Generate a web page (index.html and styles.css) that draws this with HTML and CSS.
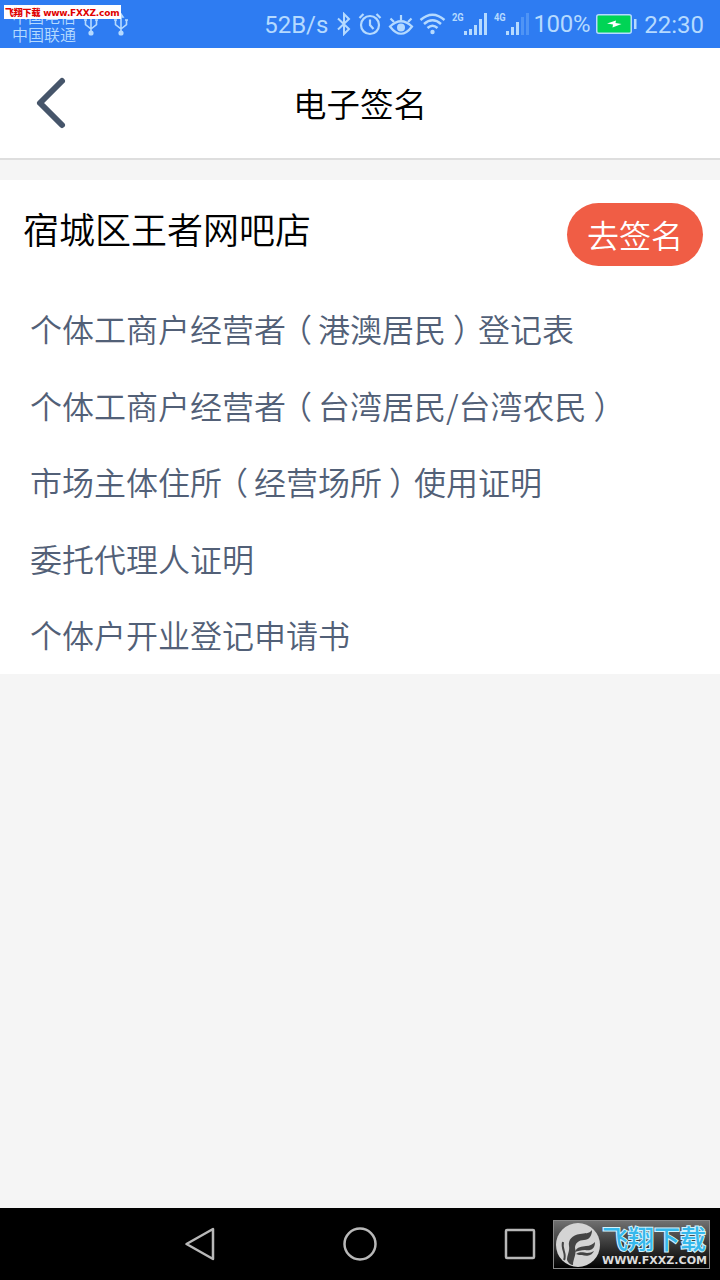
FILE: index.html
```html
<!DOCTYPE html>
<html lang="zh-CN">
<head>
    <meta charset="UTF-8">
    <meta name="viewport" content="width=device-width, initial-scale=1.0">
    <title>电子签名</title>
    <link rel="stylesheet" href="styles.css">
</head>
<body>
    <div class="status-bar">
        <div class="carriers">
            <span>中国电信</span>
            <span>中国联通</span>
        </div>
        <svg class="usb" width="46" height="24" viewBox="0 0 46 24" fill="none" stroke="#b5daff" stroke-width="1.6">
            <g id="usb">
                <path d="M8 2v18M2.500 7v4.500l5.500 4.500M13.500 7v4.500l-5.500 4.500"/>
                <circle cx="8" cy="20" r="1.800" fill="#b5daff"/>
                <path d="M1 7h3M12 7h3M6 4l2-3 2 3z"/>
            </g>
            <use href="#usb" x="30"/>
        </svg>
        <div class="indicators">
            <span class="speed">52B/s</span>
            <svg class="bluetooth" width="14" height="24" viewBox="0 0 14 24" fill="none" stroke="#b5daff" stroke-width="2">
                <path d="M1 6.500l11 10.500-5 5V2l5 5L1 17.500"/>
            </svg>
            <svg class="alarm" width="24" height="24" viewBox="0 0 24 24" fill="none" stroke="#b5daff" stroke-width="2.200">
                <circle cx="12" cy="13" r="9"/>
                <path d="M12 7.500V13l3.500 4M1.500 6l4-4M22.500 6l-4-4"/>
            </svg>
            <svg class="eye" width="26" height="24" viewBox="0 0 26 24" fill="none" stroke="#b5daff" stroke-width="2.200">
                <path d="M2 14.500Q13 4 24 14.500Q13 29 2 14.500z"/>
                <circle cx="13" cy="15.500" r="4" fill="#b5daff" stroke="none"/>
                <path d="M13 8V3M6 10L2.500 6.500M20 10l3.500-3.500"/>
            </svg>
            <svg class="wifi" width="27" height="24" viewBox="0 0 27 24" fill="none" stroke="#b5daff" stroke-width="2.500">
                <path d="M1.500 8Q13.500-2.500 25.500 8M5 12Q13.500 4.500 22 12M8.500 16Q13.500 11.500 18.500 16"/>
                <circle cx="13.500" cy="20" r="2.200" fill="#b5daff" stroke="none"/>
            </svg>
            <span class="net">2G</span>
            <svg class="signal" width="24" height="24" viewBox="0 0 24 24" fill="#b5daff">
                <path d="M0 19h3v4H0zM5 17h3v6H5zM10 13h3v10h-3zM15 7h3v16h-3zM20 1h3v22h-3z"/>
            </svg>
            <span class="net">4G</span>
            <svg class="signal last" width="24" height="24" viewBox="0 0 24 24" fill="#b5daff">
                <path d="M0 19h3v4H0zM5 15h3v8H5zM10 10h3v13h-3z"/>
                <path d="M15 5h3v18h-3zM20 1h3v22h-3z" opacity=".25"/>
            </svg>
            <span class="percent">100%</span>
            <svg class="battery" width="41" height="20" viewBox="0 0 41 20">
                <rect x=".75" y=".75" width="34.500" height="18.500" rx="2" fill="#00d455" stroke="#b5daff" stroke-width="1.500"/>
                <path d="M38 5h2.500v10H38z" fill="#b5daff"/>
                <path d="M11 9.500l9-3-.5 2.500 6 1-9 3.500.5-3z" fill="#fff"/>
            </svg>
            <span class="time">22:30</span>
        </div>
        <div class="site-tag"><b>飞翔下载</b> www.FXXZ.com</div>
    </div>

    <div class="header">
        <svg class="back" width="32" height="54" viewBox="0 0 32 54" fill="none" stroke="#46556a" stroke-width="6" stroke-linecap="round" stroke-linejoin="round">
            <path d="M27 5L5 27l22 22"/>
        </svg>
        <h1>电子签名</h1>
    </div>

    <div class="card">
        <div class="card-head">
            <h2>宿城区王者网吧店</h2>
            <button class="btn">去签名</button>
        </div>
        <ul class="docs">
            <li>个体工商户经营者<i class="open">（</i>港澳居民<i class="close">）</i>登记表</li>
            <li>个体工商户经营者<i class="open">（</i>台湾居民/台湾农民<i class="close">）</i></li>
            <li>市场主体住所<i class="open">（</i>经营场所<i class="close">）</i>使用证明</li>
            <li>委托代理人证明</li>
            <li>个体户开业登记申请书</li>
        </ul>
    </div>

    <div class="nav-bar">
        <svg width="32" height="36" viewBox="0 0 32 36"><path d="M29 3v30L2.500 18z"/></svg>
        <svg width="36" height="36" viewBox="0 0 36 36"><circle cx="18" cy="18" r="15.500"/></svg>
        <svg width="32" height="36" viewBox="0 0 32 36"><rect x="2" y="4" width="28" height="28" rx="1"/></svg>
        <div class="watermark">
            <svg width="46" height="46" viewBox="0 0 46 46">
                <circle cx="23" cy="23" r="22" fill="#d4d4d4"/>
                <path d="M37 8C34 12 30 11 25 12C17 13 13 18 14 24C15 29 12 33 12 38C13 41 16 43 18 43C18 37 22 32 20 26C20 21 24 18 29 18C34 18 37 14 37 8z" fill="#444"/>
                <path d="M20 30C22 24 27 25 31 24C35 24 38 22 40 20C40 27 36 29 30 28C26 28 23 29 20 30z" fill="#444"/>
                <path d="M21 32C26 29 29 31 32 31C35 31 37 30 39 29C36 35 30 34 27 33C25 33 23 33 21 32z" fill="#444"/>
                <path d="M8 20C6 27 12 32 9 38" fill="none" stroke="#444" stroke-width="2"/>
            </svg>
            <div class="brand">
                <strong>飞翔下载</strong>
                <svg width="106" height="13" viewBox="0 0 106 13">
                    <text x="0" y="11" textLength="105" lengthAdjust="spacingAndGlyphs">WWW.FXXZ.COM</text>
                </svg>
            </div>
        </div>
    </div>
</body>
</html>
```
FILE: styles.css
```css
* {
    box-sizing: border-box;
}
body {
    display: flex;
    flex-direction: column;
    height: 1280px;
    margin: 0;
    background: #f5f5f5;
    font-family: 'Noto Sans CJK SC', sans-serif;
    font-weight: 350;
}
svg {
    display: block;
    flex: none;
}
.status-bar {
    position: relative;
    display: flex;
    height: 48px;
    padding: 0 16px 0 12px;
    background: #2e7cf2;
    color: #b5daff;
}
.carriers {
    display: flex;
    flex-direction: column;
    width: 71px;
    padding-top: 7px;
    font-size: 16px;
    line-height: 18px;
}
.usb {
    margin-top: 13px;
}
.indicators {
    display: flex;
    align-items: center;
    height: 48px;
    margin-left: auto;
    font-family: Roboto, sans-serif;
    font-size: 24px;
    font-weight: 400;
    white-space: nowrap;
}
.speed {
    padding-top: 2px;
    margin-right: 9px;
}
.bluetooth {
    margin-right: 7px;
}
.alarm {
    margin-right: 6px;
}
.eye {
    margin-right: 5px;
}
.wifi {
    margin-right: 6px;
}
.net {
    width: 12px;
    margin-bottom: 13px;
    font-size: 11px;
    font-weight: 700;
    line-height: 12px;
    transform: scaleX(0.85);
    transform-origin: left;
}
.signal {
    margin-right: 6px;
}
.signal.last {
    margin-right: 3px;
}
.percent {
    margin-right: 6px;
    padding-bottom: 1px;
    letter-spacing: -0.3px;
}
.battery {
    margin-right: 7px;
}
.time {
    padding-top: 2px;
}
.site-tag {
    position: absolute;
    left: 4px;
    top: 5px;
    width: 117px;
    height: 14px;
    padding-left: 1px;
    background: #fff;
    color: #e00000;
    font: 700 9px/16px 'DejaVu Sans', 'Noto Sans CJK SC', sans-serif;
    letter-spacing: -0.2px;
    white-space: nowrap;
}
.header {
    display: grid;
    grid-template-columns: 104px 1fr 104px;
    align-items: center;
    height: 112px;
    padding: 0;
    background: #fff;
    border-bottom: 2px solid #dedede;
}
.back {
    margin-left: 35px;
}
h1 {
    margin: 0;
    color: #000;
    font-size: 33.5px;
    font-weight: 350;
    line-height: 48px;
    text-align: center;
}
.card {
    height: 494px;
    margin-top: 20px;
    background: #fff;
}
.card-head {
    display: flex;
    justify-content: space-between;
    height: 110px;
    padding: 23px 17px 0 23px;
}
h2 {
    margin: 0;
    color: #000;
    font-size: 36px;
    font-weight: 350;
    line-height: 50px;
}
.btn {
    width: 136px;
    height: 63px;
    padding: 0 0 2px;
    border: none;
    border-radius: 32px;
    background: #f05d45;
    color: #fff;
    font: inherit;
    font-size: 32px;
    line-height: 60px;
}
.docs {
    margin: 0;
    padding: 0 30px;
    color: #526077;
    font-size: 32px;
    line-height: 76.6px;
    list-style: none;
}
.docs i {
    font-style: normal;
}
/* fullwidth brackets sit closer to the middle of their cell */
.open {
    margin: 0 6px 0 -6px;
}
.close {
    margin: 0 -7px 0 7px;
}
.nav-bar {
    position: relative;
    display: flex;
    align-items: center;
    gap: 126px;
    height: 72px;
    margin-top: auto;
    padding-left: 184px;
    background: #000;
}
.nav-bar > svg {
    fill: none;
    stroke: #b8b8b8;
    stroke-width: 2.5;
    stroke-linejoin: round;
}
.watermark {
    position: absolute;
    left: 553px;
    top: 12px;
    display: flex;
    align-items: center;
    width: 157px;
    height: 49px;
    padding-left: 1px;
    border: 1px solid #888;
    background: linear-gradient(#707070, #000);
}
.brand {
    margin-left: 1px;
}
.brand strong {
    display: block;
    height: 30px;
    color: #35b8ec;
    font-size: 26px;
    font-weight: 500;
    line-height: 29px;
    white-space: nowrap;
    -webkit-text-stroke: 2px #d4f3fc;
    paint-order: stroke fill;
}
.brand text {
    fill: #ddd;
    font: 700 11px 'DejaVu Sans', sans-serif;
}
```
